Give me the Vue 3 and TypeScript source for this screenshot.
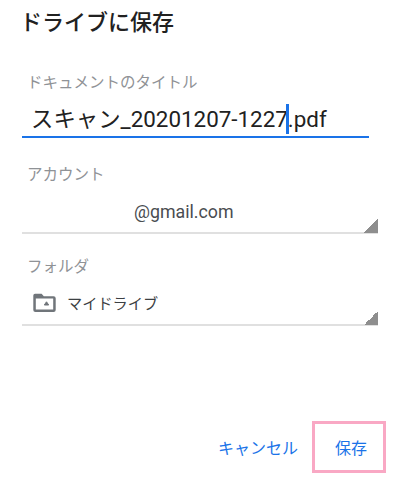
<script setup lang="ts">
const title = "スキャン_20201207-1227";
</script>

<template>
  <div class="page">
    <h1 class="heading">ドライブに保存</h1>
    <section class="field first">
      <label class="label">ドキュメントのタイトル</label>
      <div class="input"><span>{{ title }}</span><i class="caret"></i><span>.pdf</span></div>
    </section>
    <section class="field account">
      <label class="label">アカウント</label>
      <div class="select center"><span class="mail">@gmail.com</span></div>
    </section>
    <section class="field folder">
      <label class="label">フォルダ</label>
      <div class="select">
        <svg class="icon" width="24" height="20" viewBox="0 0 24 20">
          <path fill-rule="evenodd" fill="#70757a" d="M3 .8h6.6l2.2 2.4H21.6a2.1 2.1 0 0 1 2.1 2.1v11.6a2.1 2.1 0 0 1-2.1 2.1H3.4a2.1 2.1 0 0 1-2.1-2.1V2.5A1.7 1.7 0 0 1 3 .8zM3.8 5.6v10.8h17.4V5.6z"/>
          <path d="M14.5 8.8l2.2 3.2h-4.4z" fill="#70757a" stroke="#70757a" stroke-width="1" stroke-linejoin="round"/>
        </svg>
        <span class="drive">マイドライブ</span>
      </div>
    </section>
    <footer class="actions">
      <button class="btn cancel">キャンセル</button>
      <button class="btn save">保存</button>
    </footer>
  </div>
</template>

<style scoped>
.page {
  width: 400px;
  height: 478px;
  box-sizing: border-box;
  padding: 9px 32px 0 22px;
  background: #fff;
  color: #202124;
  font-family: Roboto, "Noto Sans CJK JP", sans-serif;
  overflow: hidden;
  display: flex;
  flex-direction: column;
}
.heading {
  margin: 0 0 0 -2px;
  font-size: 22px;
  line-height: 28px;
  font-weight: 500;
  color: #212121;
}
.field { display: flex; flex-direction: column; }
.first { margin-top: 36px; width: 347px; }
.account { margin-top: 27px; }
.folder { margin-top: 23px; }
.label {
  margin-left: 5px;
  font-size: 15.5px;
  line-height: 20px;
  color: #8f9296;
}
.input {
  margin-top: 11px;
  height: 34px;
  box-sizing: border-box;
  padding-left: 9px;
  padding-bottom: 2px;
  border-bottom: 2px solid #1a73e8;
  display: flex;
  align-items: center;
  font-size: 22.4px;
  line-height: 28px;
  color: #212121;
  white-space: nowrap;
}
.caret {
  width: 3px;
  height: 30px;
  margin: 0 -1px 0 -2px;
  background: #1a73e8;
  flex: none;
}
.select {
  position: relative;
  height: 46px;
  margin-top: 3px;
  width: 356px;
  box-sizing: border-box;
  padding-top: 2px;
  border-bottom: 2px solid #e0e0e0;
  display: flex;
  align-items: center;
  font-size: 16px;
  color: #4a4d51;
}
.select::after {
  content: "";
  position: absolute;
  right: 0;
  bottom: -1px;
  width: 14px;
  height: 14px;
  background: linear-gradient(to bottom right, transparent 50%, #8e8e8e 50%);
}
.center { padding-left: 112px; }
.mail { font-size: 17.8px; }
.icon { margin-left: 10px; flex: none; }
.drive { margin-left: 11px; margin-bottom: 3px; font-size: 15.2px; color: #3c4043; }
.actions {
  margin-top: auto;
  margin-bottom: 5px;
  display: flex;
  justify-content: flex-end;
  align-items: center;
  gap: 14px;
  margin-right: -18px;
}
.btn {
  border: none;
  background: none;
  padding: 0;
  font-family: inherit;
  font-size: 16px;
  color: #1a73e8;
}
.save {
  width: 74px;
  height: 52px;
  box-sizing: border-box;
  border: 3px solid #f9a8c4;
  padding-left: 4px;
}
</style>
<style>
html, body { margin: 0; background: #fff; }
</style>
